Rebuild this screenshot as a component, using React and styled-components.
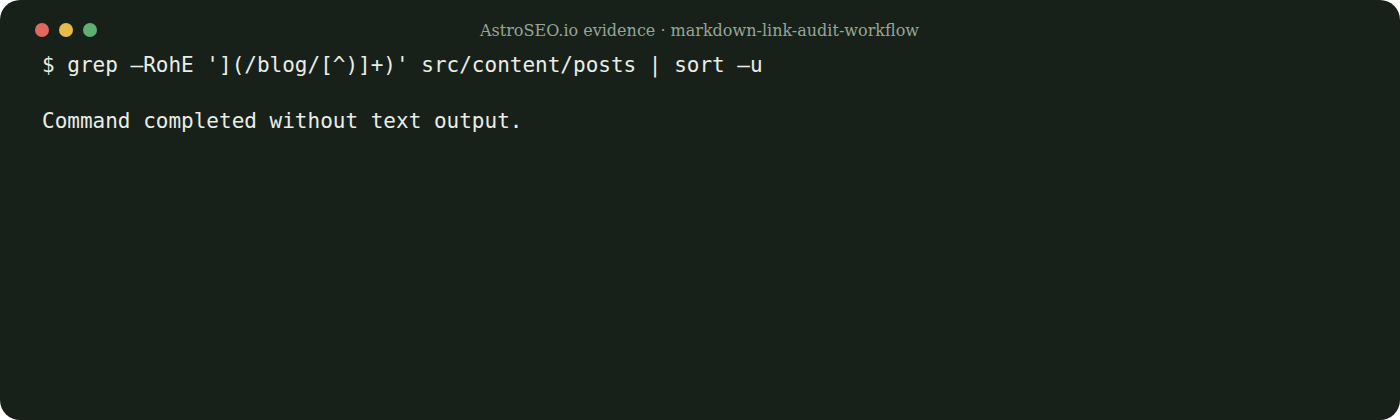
import React from "react";
import styled, { createGlobalStyle } from "styled-components";

const GlobalStyle = createGlobalStyle`
  html, body {
    margin: 0;
    padding: 0;
    background: #ffffff;
  }
`;

const lights = ["#e2685b", "#e8ba4a", "#5fae73"];

function App() {
  return (
    <React.Fragment>
      <GlobalStyle />
      <Window>
        <TitleBar>
          <Lights>
            {lights.map(color => <Light key={color} color={color} />)}
          </Lights>
          <Title>AstroSEO.io evidence · markdown-link-audit-workflow</Title>
          <span />
        </TitleBar>
        <Console>
          <Line>$ grep –RohE '](/blog/[^)]+)' src/content/posts | sort –u</Line>
          <Line />
          <Line>Command completed without text output.</Line>
        </Console>
      </Window>
    </React.Fragment>
  );
}

export default App;

const Window = styled.div`
  width: 1400px;
  height: 420px;
  box-sizing: border-box;
  background: #18201a;
  border-radius: 20px;
  overflow: hidden;
  padding-top: 18px;
`;

const TitleBar = styled.div`
  display: grid;
  grid-template-columns: 1fr auto 1fr;
  align-items: center;
  height: 24px;
  padding: 0 36px 0 35px;
`;

const Lights = styled.div`
  display: flex;
  gap: 10px;
`;

const Light = styled.span`
  width: 14px;
  height: 14px;
  border-radius: 50%;
  background: ${p => p.color};
`;

const Title = styled.div`
  font-family: "DejaVu Serif", "Liberation Serif", serif;
  font-size: 16px;
  color: #95a697;
  white-space: nowrap;
`;

const Console = styled.div`
  padding: 9px 42px;
  font-family: "DejaVu Sans Mono", "Liberation Mono", monospace;
  font-size: 21px;
  line-height: 28px;
  color: #e9ede6;
`;

const Line = styled.div`
  white-space: pre;
  min-height: 28px;
`;
